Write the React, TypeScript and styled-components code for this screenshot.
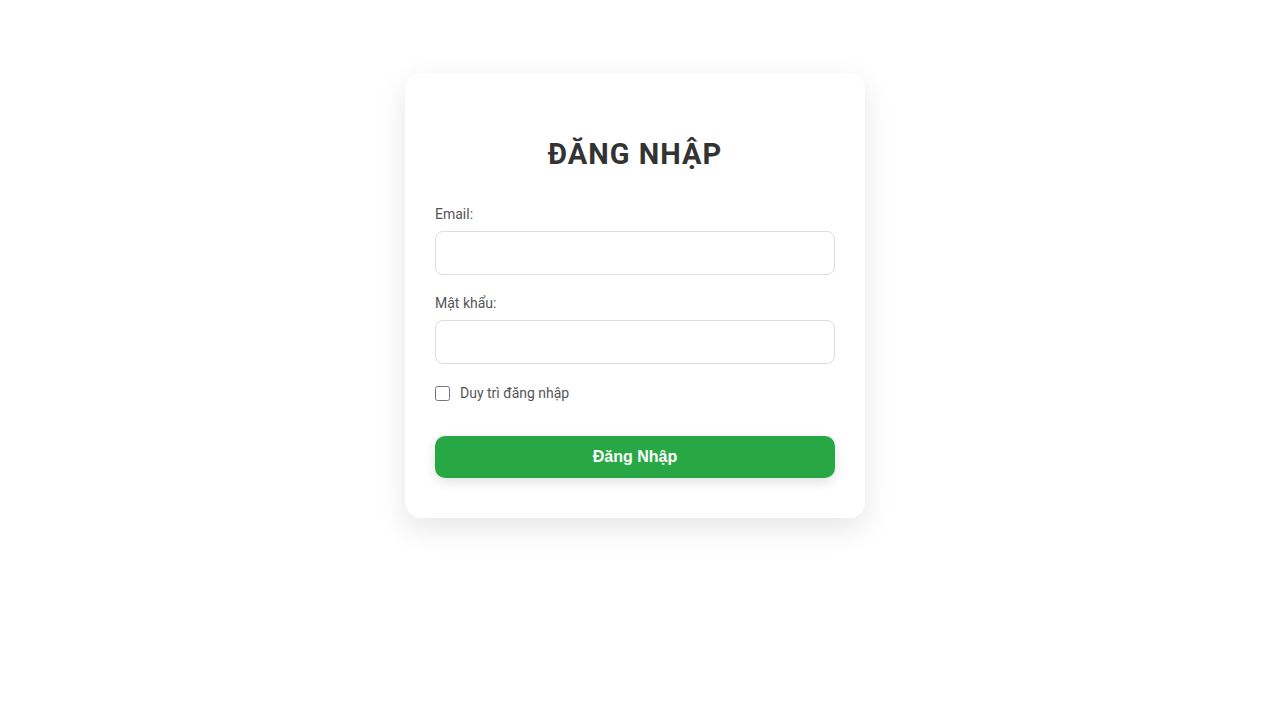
import React, { useState } from "react";
import styled, { createGlobalStyle } from "styled-components";

const GlobalStyle = createGlobalStyle`
  * { box-sizing: border-box; }
  body {
    margin: 0;
    background: #ffffff;
    font-family: Roboto, "Noto Sans", sans-serif;
  }
`;

const Page = styled.div`
  display: flex;
  justify-content: center;
  padding: 73px 11px 60px 0;
`;

const Card = styled.div`
  width: 460px;
  background: #fff;
  border-radius: 16px;
  padding: 40px 30px;
  box-shadow: 0 10px 30px rgba(0, 0, 0, 0.1);
`;

const Title = styled.h2`
  margin: 24px 0 34px;
  text-align: center;
  font-size: 29px;
  line-height: 34px;
  font-weight: 700;
  letter-spacing: 1px;
  color: #333;
`;

const Group = styled.div<{ $last?: boolean }>`
  margin-bottom: ${({ $last }) => ($last ? "0" : "19px")};
`;

const Label = styled.label`
  display: block;
  font-size: 14px;
  line-height: 18px;
  color: #555;
  margin-bottom: 8px;
`;

const Input = styled.input`
  display: block;
  width: 100%;
  height: 44px;
  padding: 0 12px;
  border: 1px solid #ddd;
  border-radius: 8px;
  font-size: 14px;
  font-family: inherit;
  outline: none;
`;

const CheckRow = styled.label`
  display: flex;
  align-items: center;
  gap: 10px;
  margin: 20px 0 34px;
  font-size: 14px;
  line-height: 18px;
  color: #555;
  cursor: pointer;
`;

const Box = styled.input`
  margin: 0;
  width: 15px;
  height: 15px;
`;

const Submit = styled.button`
  display: block;
  width: 100%;
  height: 42px;
  border: none;
  border-radius: 10px;
  background: #28a745;
  color: #fff;
  font-family: "Liberation Sans", Arial, sans-serif;
  font-size: 16px;
  font-weight: 700;
  cursor: pointer;
  box-shadow: 0 4px 12px rgba(0, 0, 0, 0.12);
`;

export default function App() {
  const [email, setEmail] = useState("");
  const [password, setPassword] = useState("");
  const [remember, setRemember] = useState(false);

  return (
    <>
      <GlobalStyle />
      <Page>
        <Card>
          <Title>ĐĂNG NHẬP</Title>
          <form onSubmit={(e) => e.preventDefault()}>
            <Group>
              <Label htmlFor="email">Email:</Label>
              <Input
                id="email"
                type="email"
                value={email}
                onChange={(e) => setEmail(e.target.value)}
              />
            </Group>
            <Group $last>
              <Label htmlFor="password">Mật khẩu:</Label>
              <Input
                id="password"
                type="password"
                value={password}
                onChange={(e) => setPassword(e.target.value)}
              />
            </Group>
            <CheckRow>
              <Box
                type="checkbox"
                checked={remember}
                onChange={(e) => setRemember(e.target.checked)}
              />
              Duy trì đăng nhập
            </CheckRow>
            <Submit type="submit">Đăng Nhập</Submit>
          </form>
        </Card>
      </Page>
    </>
  );
}
